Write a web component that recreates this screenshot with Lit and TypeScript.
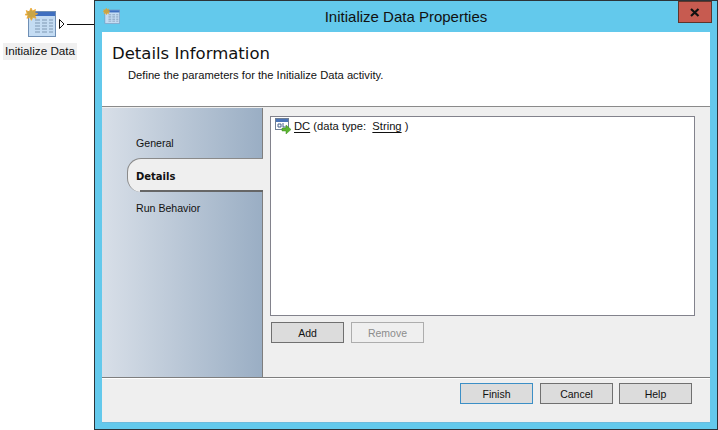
import { LitElement, html, css, svg } from "lit";
import { customElement } from "lit/decorators.js";

const tableIcon = (w: number, h: number) => html`<svg width=${w} height=${h} viewBox="0 0 31 29">
  <rect x="3.500" y="3.500" width="27" height="25" fill="#c4dcf3" stroke="#6f8fb5"/>
  <rect x="4" y="4" width="26" height="4" fill="#3f6fc0"/>
  ${[12, 15, 18, 21, 24].map(
    (y) => svg`<path d="M10 ${y}h5M17 ${y}h5M24 ${y}h4" stroke="#7f97b3" stroke-width="1.200"/>`
  )}
  <path d="M6 0l1.500 3 3-1.500-1 3.200 3.200 1-3 1.600 1.300 3-3.200-1-1.400 3-1.500-3-3 1 1.200-3L-1 6.700l3.200-1-1-3.200 3 1.500z" fill="#c9a545" stroke="#f0a830" stroke-width=".8"/>
</svg>`;

@customElement("app-root")
export class AppRoot extends LitElement {
  static styles = css`
    :host {
      display: block;
      position: relative;
      width: 718px;
      height: 430px;
      overflow: hidden;
      background: #fff;
      font-family: "Liberation Sans", Arial, sans-serif;
      font-size: 11.200px;
      color: #111;
    }
    .node {
      position: absolute;
      left: 3px;
      top: 8px;
      width: 74px;
      display: flex;
      flex-direction: column;
      align-items: center;
    }
    .node-icon { display: block; height: 29px; }
    .node-label {
      margin-top: 6px;
      width: 100%;
      height: 17px;
      line-height: 16px;
      background: #f0f0f0;
      text-align: center;
      white-space: nowrap;
      font-size: 11.700px;
    }
    .port { position: absolute; left: 58px; top: 18px; }
    .wire { position: absolute; left: 67px; top: 24px; width: 27px; height: 1px; background: #111; }
    .window {
      position: absolute;
      left: 94px;
      top: 0;
      width: 624px;
      height: 430px;
      box-sizing: border-box;
      border: 1px solid #2c3338;
      background: #63c9ec;
      padding: 0 7px 7px 7px;
      display: flex;
      flex-direction: column;
    }
    .title {
      position: relative;
      height: 31px;
      flex: none;
      display: flex;
      align-items: center;
      justify-content: center;
      font-size: 15px;
      box-sizing: border-box;
    }
    .title-icon { position: absolute; left: 1px; top: 7px; }
    .close {
      position: absolute;
      right: -2px;
      top: 0;
      width: 34px;
      height: 22px;
      box-sizing: border-box;
      background: #c75b50;
      border: 1px solid #5e352c;
      display: flex;
      align-items: center;
      justify-content: center;
    }
    .body {
      flex: 1;
      min-height: 0;
      display: flex;
      flex-direction: column;
      background: #efefef;
      box-shadow: 0 1px 0 #6cbbdd;
    }
    .head {
      height: 75px;
      flex: none;
      box-sizing: border-box;
      background: #fff;
      padding: 10px 10px 0;
      border-bottom: 1px solid #8a8a8a;
    }
    h1 {
      margin: 0;
      font-family: "DejaVu Sans", sans-serif;
      font-weight: 400;
      font-size: 16.500px;
      line-height: 24px;
    }
    .head p { margin: 2px 0 0 16px; line-height: 15px; }
    .main { flex: 1; min-height: 0; display: flex; border-bottom: 1px solid #7e7e7e; }
    .side {
      width: 161px;
      flex: none;
      box-sizing: border-box;
      margin-top: 1px;
      border-right: 1px solid #7e7e7e;
      background: linear-gradient(90deg, #d8dfe8, #9aaec4);
      padding-top: 25px;
      display: flex;
      flex-direction: column;
      font-size: 10.600px;
    }
    .tab { height: 32px; line-height: 19px; padding-left: 34px; display: flex; }
    .tab.general { height: 25px; padding-top: 1px; box-sizing: border-box; }
    .tab.run { height: 32px; padding-top: 7px; box-sizing: border-box; }
    .tab.on {
      height: 34px;
      box-sizing: border-box;
      margin-left: 25px;
      margin-right: -1px;
      padding-left: 8px;
      padding-top: 1px;
      align-items: center;
      background: #efefef;
      border: 1px solid #8a8a8a;
      border-right: 0;
      border-bottom: 0;
      border-radius: 14px 0 0 14px;
      font-family: "DejaVu Sans", sans-serif;
      font-weight: 700;
      font-size: 10px;
      position: relative;
    }
    .tab.on::after {
      content: "";
      position: absolute;
      left: 12px;
      right: 0;
      bottom: 0;
      height: 2px;
      background: #666;
    }
    .pane { flex: 1; min-width: 0; padding: 9px 15px 0 7px; display: flex; flex-direction: column; }
    .list {
      width: 425px;
      height: 200px;
      box-sizing: border-box;
      background: #fff;
      border: 1px solid #82828c;
      padding: 1px 4px;
      display: flex;
      align-items: flex-start;
      align-self: flex-start;
    }
    .row { display: flex; align-items: center; gap: 3px; height: 16px; white-space: pre; }
    .row u { text-underline-offset: 2px; }
    .row svg { display: block; }
    .btns { display: flex; gap: 7px; margin: 6px 0 0 1px; }
    button {
      width: 73px;
      height: 21px;
      box-sizing: border-box;
      padding: 0;
      font: inherit;
      font-size: 10.500px;
      color: #111;
      background: #dcdcdc;
      border: 1px solid #707070;
    }
    button[disabled] { background: #efefef; border-color: #adadad; color: #8c8c8c; }
    .foot {
      height: 44px;
      flex: none;
      box-sizing: border-box;
      border-top: 1px solid #fff;
      display: flex;
      justify-content: flex-end;
      gap: 6px;
      padding: 4px 18px 0 0;
    }
    .foot button.primary { border-color: #3c8fc6; margin-right: 1px; }
  `;

  render() {
    return html`
      <div class="node">
        <span class="node-icon">${tableIcon(31, 29)}</span>
        <div class="node-label">Initialize Data</div>
      </div>
      <svg class="port" width="8" height="12" viewBox="0 0 8 12"><path d="M1.500 1.500v9l4.500-4.500z" fill="#fff" stroke="#111"/></svg>
      <div class="wire"></div>
      <div class="window">
        <div class="title">
          <span class="title-icon">${tableIcon(17, 16)}</span>
          Initialize Data Properties
          <div class="close">
            <svg width="10" height="9" viewBox="0 0 10 9"><path d="M1 1l7.500 7M8.500 1L1 8" stroke="#111" stroke-width="2.200"/></svg>
          </div>
        </div>
        <div class="body">
          <div class="head">
            <h1>Details Information</h1>
            <p>Define the parameters for the Initialize Data activity.</p>
          </div>
          <div class="main">
            <div class="side">
              <div class="tab general">General</div>
              <div class="tab on">Details</div>
              <div class="tab run">Run Behavior</div>
            </div>
            <div class="pane">
              <div class="list">
                <div class="row">
                  <svg width="16" height="16" viewBox="0 0 16 16">
                    <rect x=".5" y=".5" width="13" height="11" fill="#fff" stroke="#6f7f95"/>
                    <rect x="1" y="1" width="12" height="3" fill="#4a74b8"/>
                    <path d="M3 6h3v3H3zM8 5v4h3" fill="none" stroke="#44618c"/>
                    <path d="M7 10h4V7l5 4.500-5 4.500v-3H7z" fill="#5cb531" stroke="#3d8f20" stroke-width=".5"/>
                  </svg>
                  <span><u>DC</u> (data type:  <u>String</u> )</span>
                </div>
              </div>
              <div class="btns">
                <button>Add</button>
                <button disabled>Remove</button>
              </div>
            </div>
          </div>
          <div class="foot">
            <button class="primary">Finish</button>
            <button>Cancel</button>
            <button>Help</button>
          </div>
        </div>
      </div>
    `;
  }
}
